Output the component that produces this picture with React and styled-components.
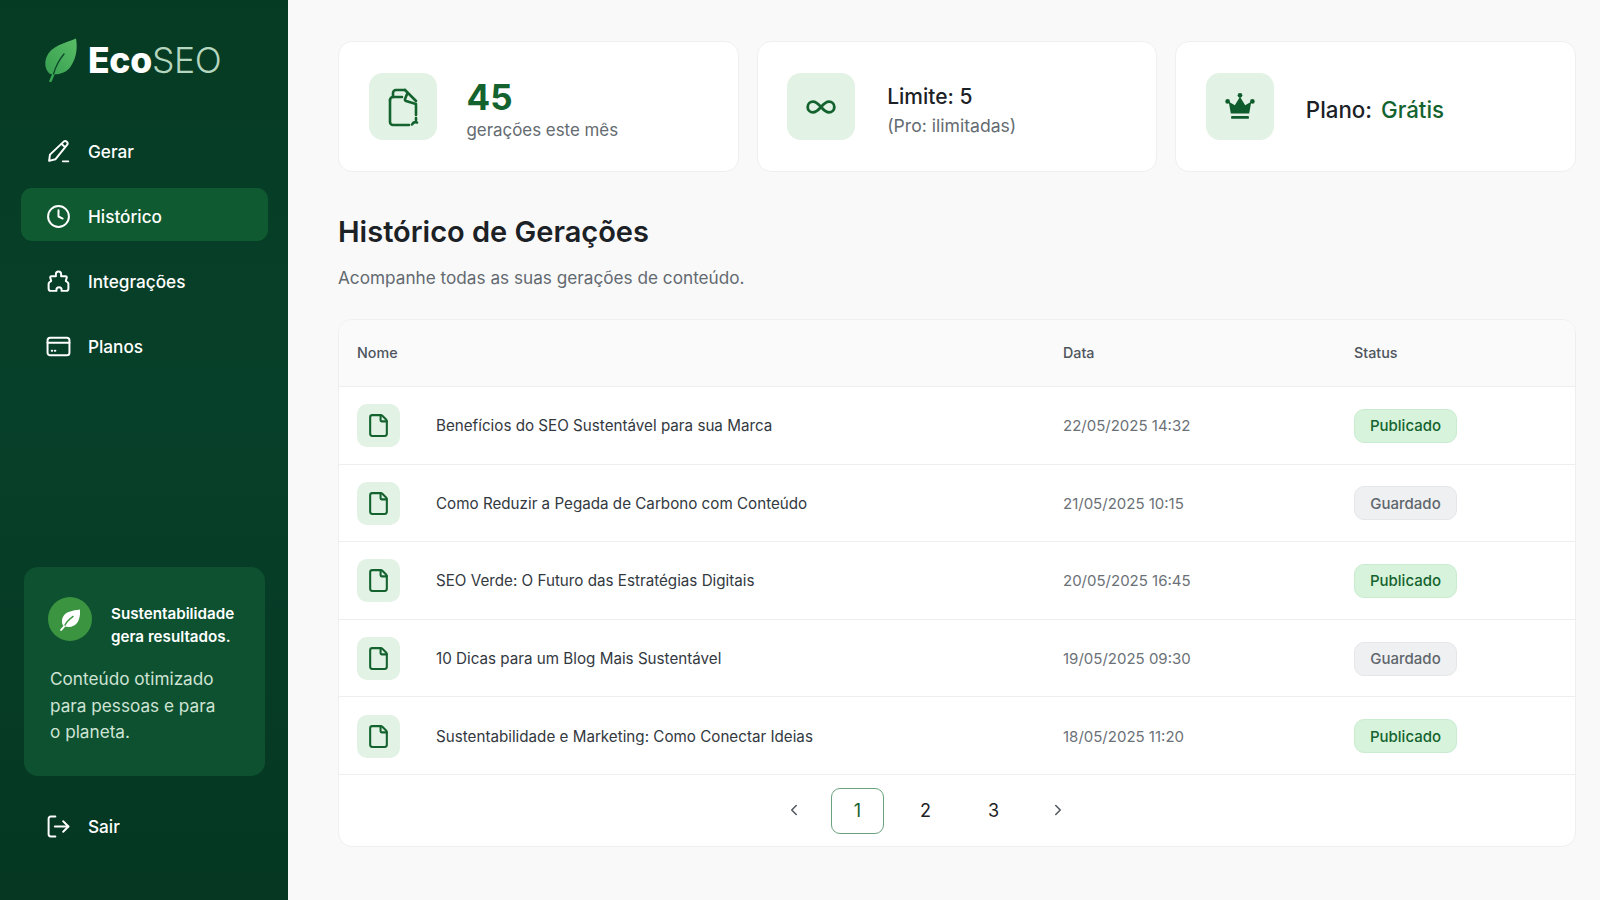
import styled, { createGlobalStyle } from "styled-components";
import { Clock, File, Infinity as InfinityIcon, ChevronLeft, ChevronRight } from "lucide-react";

const rows = [
    { name: "Benefícios do SEO Sustentável para sua Marca", date: "22/05/2025 14:32", status: "Publicado" },
    { name: "Como Reduzir a Pegada de Carbono com Conteúdo", date: "21/05/2025 10:15", status: "Guardado" },
    { name: "SEO Verde: O Futuro das Estratégias Digitais", date: "20/05/2025 16:45", status: "Publicado" },
    { name: "10 Dicas para um Blog Mais Sustentável", date: "19/05/2025 09:30", status: "Guardado" },
    { name: "Sustentabilidade e Marketing: Como Conectar Ideias", date: "18/05/2025 11:20", status: "Publicado" },
];

const LeafLogo = () => (
    <svg width="34" height="44" viewBox="0 0 34 44">
        <defs>
            <linearGradient id="leafFill" x1="0" y1="1" x2="1" y2="0">
                <stop offset="0" stopColor="#369f50" />
                <stop offset="1" stopColor="#5abd66" />
            </linearGradient>
        </defs>
        <path d="M32 0.500C21 5 7 8 2.500 19C0 26 1.500 32 6 36C13 37 22 36 27 28C33 19 33.500 9 32 0.500Z" fill="url(#leafFill)" />
        <path d="M6.500 43L9.500 36" stroke="#3aa655" strokeWidth="2.400" strokeLinecap="round" />
        <path d="M9.500 36C11.500 29 15 22 20 16" stroke="#0c4a2a" strokeWidth="1.300" fill="none" strokeLinecap="round" />
    </svg>
);

const SmallLeaf = () => (
    <svg width="25" height="25" viewBox="0 0 24 24">
        <path d="M21 2.500C14 3.500 7 4.500 4.500 10C3 14 4 17 6 18.500C10 20 16 19.500 19 14.500C21 11 21.500 6.500 21 2.500Z" fill="#fff" />
        <path d="M6 18.500C8 14.500 11 11.500 14.500 9" stroke="#3a9440" strokeWidth="1.300" fill="none" strokeLinecap="round" />
        <path d="M3 22L6 18.500" stroke="#fff" strokeWidth="1.800" strokeLinecap="round" />
    </svg>
);

const PencilIcon = () => (
    <svg width="25" height="25" viewBox="0 0 24 24" fill="none" stroke="currentColor" strokeWidth="1.900" strokeLinecap="round" strokeLinejoin="round">
        <path d="M17 2.500a2.300 2.300 0 0 1 3.400 3L9 19.500L3 21l.8-6L17 2.500Z" />
        <path d="M15 4.800l3.300 3" />
        <path d="M16 21.500h5.500" strokeWidth="1.500" />
    </svg>
);

const PuzzleIcon = () => (
    <svg width="25" height="25" viewBox="0 0 24 24" fill="none" stroke="currentColor" strokeWidth="1.900" strokeLinecap="round" strokeLinejoin="round">
        <path d="M9.500 7V5a2.500 2.500 0 0 1 5 0v2h4.500a1 1 0 0 1 1 .9L19 11.500l2 1.500a2 2 0 0 1 .5 1.500V19a2 2 0 0 1-2 2h-4.500v-1a2.500 2.500 0 0 0-5 0v1H4.500a2 2 0 0 1-2-2v-4.500a2 2 0 0 1 .5-1.500l2-1.500L4 7.900a1 1 0 0 1 1-.9Z" />
    </svg>
);

const CardIcon = () => (
    <svg width="25" height="25" viewBox="0 0 24 24" fill="none" stroke="currentColor" strokeWidth="1.900" strokeLinecap="round" strokeLinejoin="round">
        <rect x="1.500" y="3.500" width="21" height="17" rx="2.500" />
        <path d="M1.500 8.500h21" />
        <path d="M5.500 16h.5M8.500 16h.5" />
    </svg>
);

const ExitIcon = () => (
    <svg width="25" height="25" viewBox="0 0 24 24" fill="none" stroke="currentColor" strokeWidth="1.900" strokeLinecap="round" strokeLinejoin="round">
        <path d="M9 2.500H4.500a2 2 0 0 0-2 2v15a2 2 0 0 0 2 2H9" />
        <path d="M8.500 12h13" />
        <path d="M16.500 7l5 5l-5 5" />
    </svg>
);

const DocsIcon = () => (
    <svg width="36" height="40" viewBox="0 0 36 40" fill="none" stroke="#14632f" strokeWidth="2.600" strokeLinecap="round" strokeLinejoin="round">
        <path d="M5 13V35a3 3 0 0 0 3 3h16" />
        <path d="M5 13a3 3 0 0 1 3-3h9" />
        <path d="M8 10V6a3 3 0 0 1 3-3h9" />
        <path d="M20 3l11 11" />
        <path d="M22.500 6l-2.500 6a1.500 1.500 0 0 0 1 2l10 3" />
        <path d="M31 18v10M31 31v2" />
        <path d="M27 37.500c1-2 3-2.800 5-2" />
    </svg>
);

const CrownIcon = () => (
    <svg width="32" height="30" viewBox="0 0 32 32" fill="#0f5c2c">
        <circle cx="16" cy="3.500" r="2.500" />
        <circle cx="2.800" cy="10" r="2.500" />
        <circle cx="29.200" cy="10" r="2.500" />
        <path d="M16 5L21.500 14L28 10.500L25.800 23H6.200L4 10.500L10.500 14Z" />
        <rect x="6.500" y="25.500" width="19" height="3" rx="0.500" />
    </svg>
);

const App = () => {
    return (
        <Page>
            <GlobalStyle />
            <Sidebar>
                <Logo>
                    <LeafLogo />
                    <LogoText><b>Eco</b><span>SEO</span></LogoText>
                </Logo>
                <Nav>
                    <NavItem><PencilIcon />Gerar</NavItem>
                    <NavItem $active><Clock size={25} strokeWidth={1.9} />Histórico</NavItem>
                    <NavItem><PuzzleIcon />Integrações</NavItem>
                    <NavItem><CardIcon />Planos</NavItem>
                </Nav>
                <Promo>
                    <PromoHead>
                        <PromoBadge><SmallLeaf /></PromoBadge>
                        <PromoTitle>Sustentabilidade<br />gera resultados.</PromoTitle>
                    </PromoHead>
                    <PromoText>Conteúdo otimizado<br />para pessoas e para<br />o planeta.</PromoText>
                </Promo>
                <LogoutItem><ExitIcon />Sair</LogoutItem>
            </Sidebar>

            <Main>
                <Stats>
                    <StatCard>
                        <StatIcon><DocsIcon /></StatIcon>
                        <StatBody $tight>
                            <BigNumber>45</BigNumber>
                            <StatSub>gerações este mês</StatSub>
                        </StatBody>
                    </StatCard>
                    <StatCard>
                        <StatIcon><InfinityIcon size={32} strokeWidth={2.1} color="#14632f" /></StatIcon>
                        <StatBody>
                            <StatTitle>Limite: 5</StatTitle>
                            <StatSmall>(Pro: ilimitadas)</StatSmall>
                        </StatBody>
                    </StatCard>
                    <StatCard>
                        <StatIcon><CrownIcon /></StatIcon>
                        <StatBody>
                            <StatTitle $large>Plano: <Green>Grátis</Green></StatTitle>
                        </StatBody>
                    </StatCard>
                </Stats>

                <Heading>Histórico de Gerações</Heading>
                <SubHeading>Acompanhe todas as suas gerações de conteúdo.</SubHeading>

                <Table>
                    <HeadRow>
                        <span>Nome</span>
                        <span>Data</span>
                        <span>Status</span>
                    </HeadRow>
                    {rows.map((row) => (
                        <Row key={row.name}>
                            <NameCell>
                                <FileBox><File size={25} strokeWidth={2} /></FileBox>
                                {row.name}
                            </NameCell>
                            <DateCell>{row.date}</DateCell>
                            <div><Badge $published={row.status === "Publicado"}>{row.status}</Badge></div>
                        </Row>
                    ))}
                    <Pagination>
                        <Arrow><ChevronLeft size={18} strokeWidth={2} /></Arrow>
                        <PageButton $current>1</PageButton>
                        <PageButton>2</PageButton>
                        <PageButton>3</PageButton>
                        <Arrow><ChevronRight size={18} strokeWidth={2} /></Arrow>
                    </Pagination>
                </Table>
            </Main>
        </Page>
    );
};

export default App;

const GlobalStyle = createGlobalStyle`
    * { box-sizing: border-box; }
    body {
        margin: 0;
        font-family: "Inter", "Liberation Sans", sans-serif;
        background: #f9f9fa;
    }
`;

const Page = styled.div`
    display: flex;
    height: 100vh;
    overflow: hidden;
`;

const Sidebar = styled.aside`
    width: 288px;
    flex-shrink: 0;
    display: flex;
    flex-direction: column;
    padding: 38px 20px 0 21px;
    color: #fff;
    background: linear-gradient(180deg, #063b23 0%, #07402a 45%, #053722 100%);
`;

const Logo = styled.div`
    display: flex;
    align-items: center;
    gap: 10px;
    height: 44px;
    padding-left: 23px;
`;

const LogoText = styled.div`
    font-size: 35.500px;
    letter-spacing: -0.3px;

    b { font-weight: 800; color: #fff; }
    span { font-weight: 300; color: #b5d6bf; }
`;

const Nav = styled.nav`
    display: flex;
    flex-direction: column;
    gap: 12px;
    margin-top: 41px;
`;

const NavItem = styled.div`
    display: flex;
    align-items: center;
    gap: 17px;
    height: 53px;
    padding: 3px 0 0 25px;
    border-radius: 11px;
    font-size: 17.200px;
    font-weight: 500;
    background: ${(p) => (p.$active ? "#0f5a30" : "transparent")};
`;

const Promo = styled.div`
    margin: auto 3px 0;
    height: 209px;
    padding: 30px 24px 0;
    border-radius: 14px;
    background: #0d5130;
`;

const PromoHead = styled.div`
    display: flex;
    align-items: flex-start;
    gap: 19px;
`;

const PromoBadge = styled.div`
    width: 44px;
    height: 44px;
    flex-shrink: 0;
    display: flex;
    align-items: center;
    justify-content: center;
    border-radius: 50%;
    background: #3a9440;
`;

const PromoTitle = styled.div`
    padding-top: 6px;
    font-size: 15.200px;
    font-weight: 600;
    line-height: 22.500px;
`;

const PromoText = styled.p`
    margin: 18px 0 0 2px;
    font-size: 17.200px;
    line-height: 26.500px;
    color: #cfe3d4;
`;

const LogoutItem = styled(NavItem)`
    margin: 22px 0 49px;
`;

const Main = styled.main`
    flex: 1;
    min-width: 0;
    padding: 41px 24px 0 50px;
`;

const Stats = styled.section`
    display: grid;
    grid-template-columns: repeat(3, 1fr);
    gap: 18px;
`;

const StatCard = styled.div`
    display: flex;
    align-items: center;
    height: 131px;
    padding-left: 29.500px;
    background: #fff;
    border: 1px solid #eef0f0;
    border-radius: 14px;
`;

const StatIcon = styled.div`
    width: 68px;
    height: 67px;
    flex-shrink: 0;
    display: flex;
    align-items: center;
    justify-content: center;
    border-radius: 14px;
    background: #e2f2e4;
`;

const StatBody = styled.div`
    margin-left: ${(p) => (p.$tight ? "30px" : "32px")};
    padding-top: 7px;
`;

const BigNumber = styled.div`
    font-size: 35px;
    font-weight: 700;
    line-height: 40px;
    color: #14632f;
`;

const StatSub = styled.div`
    font-size: 16.900px;
    line-height: 26px;
    color: #636a70;
`;

const StatTitle = styled.div`
    font-size: ${(p) => (p.$large ? "22.300px" : "21px")};
    font-weight: 500;
    line-height: 30px;
    color: #1c2126;
`;

const Green = styled.span`
    margin-left: 3px;
    color: #14632f;
`;

const StatSmall = styled.div`
    margin-top: 2px;
    font-size: 17.600px;
    line-height: 24px;
    color: #636a70;
`;

const Heading = styled.h1`
    margin: 42px 0 0;
    font-size: 29px;
    font-weight: 600;
    line-height: 36px;
    color: #1c2126;
`;

const SubHeading = styled.p`
    margin: 14px 0 0;
    font-size: 17.200px;
    line-height: 28px;
    color: #636a70;
`;

const Table = styled.section`
    margin-top: 27px;
    background: #fff;
    border: 1px solid #eef0f0;
    border-radius: 14px;
    overflow: hidden;
`;

const HeadRow = styled.div`
    display: grid;
    grid-template-columns: 706px 291px 1fr;
    align-items: center;
    height: 66px;
    padding: 0 0 2px 18px;
    background: #fafafb;
    font-size: 14.300px;
    font-weight: 500;
    color: #4e555c;
`;

const Row = styled.div`
    display: grid;
    grid-template-columns: 706px 291px 1fr;
    align-items: center;
    height: 77.600px;
    padding: 1px 0 0 18px;
    border-top: 1px solid #eceeef;
    font-size: 15.200px;
`;

const NameCell = styled.div`
    display: flex;
    align-items: center;
    gap: 36px;
    color: #33393f;
`;

const FileBox = styled.div`
    width: 43px;
    height: 43px;
    flex-shrink: 0;
    display: flex;
    align-items: center;
    justify-content: center;
    border-radius: 10px;
    background: #e2f2e4;
    color: #14632f;
`;

const DateCell = styled.div`
    font-size: 15px;
    color: #6b7177;
`;

const Badge = styled.span`
    display: inline-flex;
    align-items: center;
    justify-content: center;
    width: 103px;
    height: 34px;
    border-radius: 10px;
    font-size: 15px;
    font-weight: 500;
    color: ${(p) => (p.$published ? "#14632f" : "#5f666c")};
    background: ${(p) => (p.$published ? "#d8f3dc" : "#eff0f2")};
    border: 1px solid ${(p) => (p.$published ? "#c9ecd0" : "#e4e6e9")};
`;

const Pagination = styled.div`
    display: flex;
    align-items: center;
    justify-content: center;
    height: 72px;
    padding-right: 63px;
    border-top: 1px solid #eceeef;
`;

const Arrow = styled.div`
    display: flex;
    align-items: center;
    justify-content: center;
    width: 60px;
    color: #4e555c;
`;

const PageButton = styled.div`
    display: flex;
    align-items: center;
    justify-content: center;
    width: 53px;
    height: 46px;
    margin: 1px 7.500px 0;
    border-radius: 9px;
    font-size: 18px;
    color: ${(p) => (p.$current ? "#14632f" : "#1c2126")};
    border: 1px solid ${(p) => (p.$current ? "#6aa27f" : "transparent")};
`;
